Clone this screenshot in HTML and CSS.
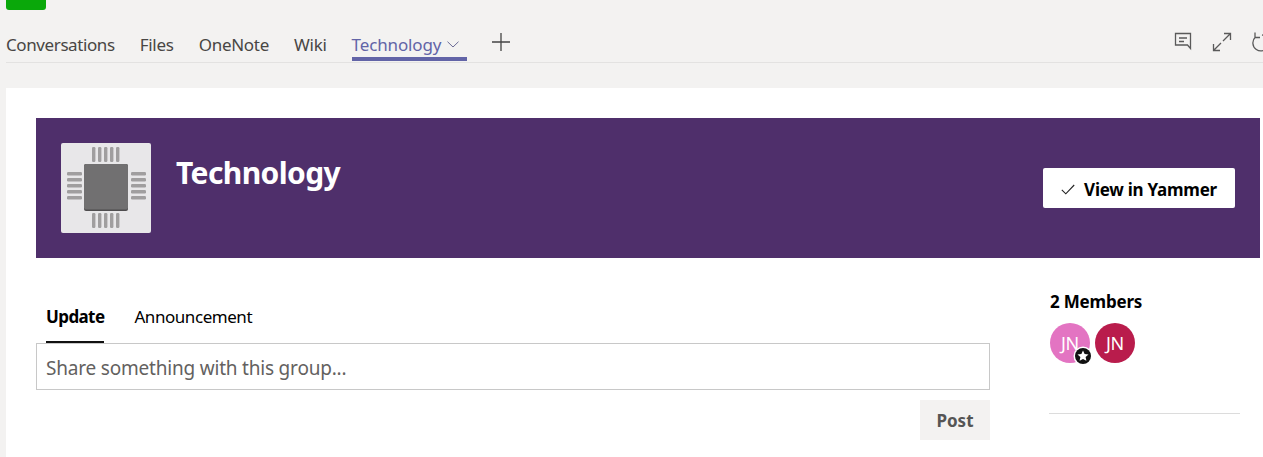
FILE: index.html
```html
<!DOCTYPE html>
<html lang="en">
<head>
<meta charset="utf-8">
<title>Technology</title>
<link rel="stylesheet" href="styles.css">
</head>
<body>
<header class="top">
  <div class="green"></div>
  <div class="tabbar">
    <nav class="tabs">
      <a class="tab first">Conversations</a>
      <a class="tab">Files</a>
      <a class="tab">OneNote</a>
      <a class="tab">Wiki</a>
      <a class="tab active">Technology
        <svg class="chev" width="12" height="7" viewBox="0 0 12 7"><path d="M.5.7 6 6 11.500.7" fill="none" stroke="#6b6b96" stroke-width="1"/></svg>
      </a>
      <svg class="plus" width="18" height="18" viewBox="0 0 18 18"><path d="M9 0v18M0 9h18" stroke="#444" stroke-width="1.300" fill="none"/></svg>
    </nav>
    <div class="actions">
      <svg class="chat" width="18" height="19" viewBox="0 0 18 19"><path d="M1.500 1.500h15v15l-3-3.500h-12zM5 6h8M5 9.500h5" fill="none" stroke="#5a5a5a" stroke-width="1.300"/></svg>
      <svg width="20" height="20" viewBox="0 0 20 20"><path d="M12 1.500h6.500V8M18.500 1.500 11 9M1.500 12v6.500H8M1.500 18.500 9 11" fill="none" stroke="#5a5a5a" stroke-width="1.300"/></svg>
      <svg class="refresh" width="20" height="20" viewBox="0 0 20 20"><path d="M4 .5v5h5M4.500 5A8 8 0 1 0 11 3" fill="none" stroke="#5a5a5a" stroke-width="1.300"/></svg>
    </div>
  </div>
</header>
<main class="panel">
  <section class="banner">
    <div class="logo">
      <svg width="90" height="90" viewBox="0 0 90 90">
        <g fill="#a09e9f">
          <rect x="31" y="4" width="3.400" height="15" rx="1.200"/><rect x="37" y="4" width="3.400" height="15" rx="1.200"/><rect x="43" y="4" width="3.400" height="15" rx="1.200"/><rect x="49" y="4" width="3.400" height="15" rx="1.200"/><rect x="55" y="4" width="3.400" height="15" rx="1.200"/>
          <rect x="31" y="70" width="3.400" height="15" rx="1.200"/><rect x="37" y="70" width="3.400" height="15" rx="1.200"/><rect x="43" y="70" width="3.400" height="15" rx="1.200"/><rect x="49" y="70" width="3.400" height="15" rx="1.200"/><rect x="55" y="70" width="3.400" height="15" rx="1.200"/>
          <rect x="6" y="29" width="15" height="3.400" rx="1.200"/><rect x="6" y="35" width="15" height="3.400" rx="1.200"/><rect x="6" y="41" width="15" height="3.400" rx="1.200"/><rect x="6" y="47" width="15" height="3.400" rx="1.200"/><rect x="6" y="53" width="15" height="3.400" rx="1.200"/>
          <rect x="70" y="29" width="15" height="3.400" rx="1.200"/><rect x="70" y="35" width="15" height="3.400" rx="1.200"/><rect x="70" y="41" width="15" height="3.400" rx="1.200"/><rect x="70" y="47" width="15" height="3.400" rx="1.200"/><rect x="70" y="53" width="15" height="3.400" rx="1.200"/>
        </g>
        <rect x="23" y="21" width="44" height="47" rx="2" fill="#4f4d4f"/>
        <rect x="23" y="21" width="44" height="45.500" rx="2" fill="#717071"/>
      </svg>
    </div>
    <h1 class="title">Technology</h1>
    <button class="yammer">
      <svg width="14" height="11" viewBox="0 0 14 11"><path d="M.8 5.800 4.800 9.800 13.200 1" fill="none" stroke="#222" stroke-width="1.100"/></svg>
      <span>View in Yammer</span>
    </button>
  </section>
  <section class="body">
    <div class="composer">
      <div class="ctabs">
        <a class="ctab on">Update</a>
        <a class="ctab">Announcement</a>
      </div>
      <div class="field">Share something with this group...</div>
      <div class="post-row"><button class="post">Post</button></div>
    </div>
    <aside class="side">
      <h2 class="members">2 Members</h2>
      <div class="avatars">
        <div class="avatar pink">JN
          <span class="badge"><svg width="12" height="12" viewBox="0 0 12 12"><path d="M6 .5l1.600 3.500 3.900.4-2.900 2.600.8 3.800L6 8.900l-3.400 1.900.8-3.800L.5 4.400 4.400 4z" fill="#fff"/></svg></span>
        </div>
        <div class="avatar crimson">JN</div>
      </div>
      <div class="rule"></div>
    </aside>
  </section>
</main>
</body>
</html>
```
FILE: styles.css
```css
* { box-sizing: border-box; }
html, body { margin: 0; height: 457px; overflow: hidden; }
body {
  background: #f3f2f1;
  font-family: "Noto Sans", "Open Sans", sans-serif;
  color: #000;
}
.top { height: 88px; padding-left: 6px; }
.green { width: 40px; height: 10px; background: #0aa80a; border-radius: 0 0 3px 3px; }
.tabbar {
  height: 53px;
  border-bottom: 1px solid #e3e2e1;
  display: flex;
  justify-content: space-between;
}
.tabs { display: flex; align-items: flex-start; gap: 25px; padding-top: 24px; }
.tab {
  font-size: 17px;
  line-height: 22px;
  height: 27px;
  color: #484644;
  white-space: nowrap;
  letter-spacing: -0.28px;
}
.tab.first { letter-spacing: -0.4px; }
.tab.active {
  color: #6264a7;
  border-bottom: 4px solid #6264a7;
  width: 115px;
  letter-spacing: -0.13px;
}
.chev { margin-left: 1px; vertical-align: 3px; }
.plus { margin-top: -1px; }
.actions { display: flex; gap: 19px; padding: 22px 0 0 0; margin-right: -12px; align-items: flex-start; width: 100px; flex: none; }
.chat { margin: 0 1px 0 -1px; }
.panel { background: #fff; margin-left: 6px; padding: 30px 3px 0 30px; height: 369px; }
.banner {
  height: 140px;
  background: #4f2f6b;
  display: flex;
  padding: 25px 25px 0 25px;
  align-items: flex-start;
}
.logo { width: 90px; height: 90px; background: #e8e7e9; border-radius: 2px; flex: none; }
.logo svg { display: block; }
.title {
  margin: 7px 0 0 25px;
  font-size: 30px;
  line-height: 46px;
  font-weight: 700;
  color: #fff;
  flex: 1;
  letter-spacing: -0.6px;
}
.yammer {
  margin-top: 25px;
  width: 192px;
  height: 40px;
  border: 0;
  border-radius: 2px;
  background: #fff;
  font: 700 17px "Noto Sans", sans-serif;
  letter-spacing: -0.25px;
  color: #000;
  display: flex;
  align-items: center;
  justify-content: center;
  gap: 9px;
  padding: 2px 0 0;
}
.body { display: flex; padding-top: 30px; }
.composer { width: 954px; flex: none; }
.ctabs { display: flex; gap: 30px; padding-left: 10px; height: 55px; }
.ctab {
  font-size: 17px;
  line-height: 28px;
  padding-top: 15px;
  height: 55px;
  letter-spacing: -0.45px;
  white-space: nowrap;
}
.ctab.on { font-weight: 700; border-bottom: 2px solid #111; letter-spacing: -0.6px; }
.field {
  height: 47px;
  border: 1px solid #c8c8c8;
  padding: 0 9px;
  line-height: 48px;
  font-size: 19px;
  color: #636160;
  letter-spacing: -0.2px;
}
.post-row { display: flex; justify-content: flex-end; padding-top: 10px; }
.post {
  width: 70px;
  height: 40px;
  border: 0;
  background: #f3f2f1;
  color: #555;
  font: 700 17px "Noto Sans", sans-serif;
  padding: 0;
}
.side { margin-left: 59px; width: 191px; flex: none; }
.members {
  margin: 0 0 9px 1px;
  font-size: 17px;
  line-height: 28px;
  height: 26px;
  font-weight: 700;
  letter-spacing: -0.2px;
}
.avatars { display: flex; gap: 5px; margin-left: 1px; }
.avatar {
  width: 40px;
  height: 40px;
  border-radius: 50%;
  color: #fff;
  font-size: 18px;
  line-height: 40px;
  text-align: center;
  position: relative;
  letter-spacing: -0.4px;
}
.pink { background: #e374c2; }
.crimson { background: #b91c4c; }
.badge {
  position: absolute;
  right: -1px;
  bottom: -1px;
  width: 16px;
  height: 16px;
  background: #111;
  border-radius: 50%;
  box-shadow: 0 0 0 1.500px #fff;
  display: flex;
  align-items: center;
  justify-content: center;
}
.rule { height: 1px; background: #dcdcdc; margin-top: 50px; }
```
